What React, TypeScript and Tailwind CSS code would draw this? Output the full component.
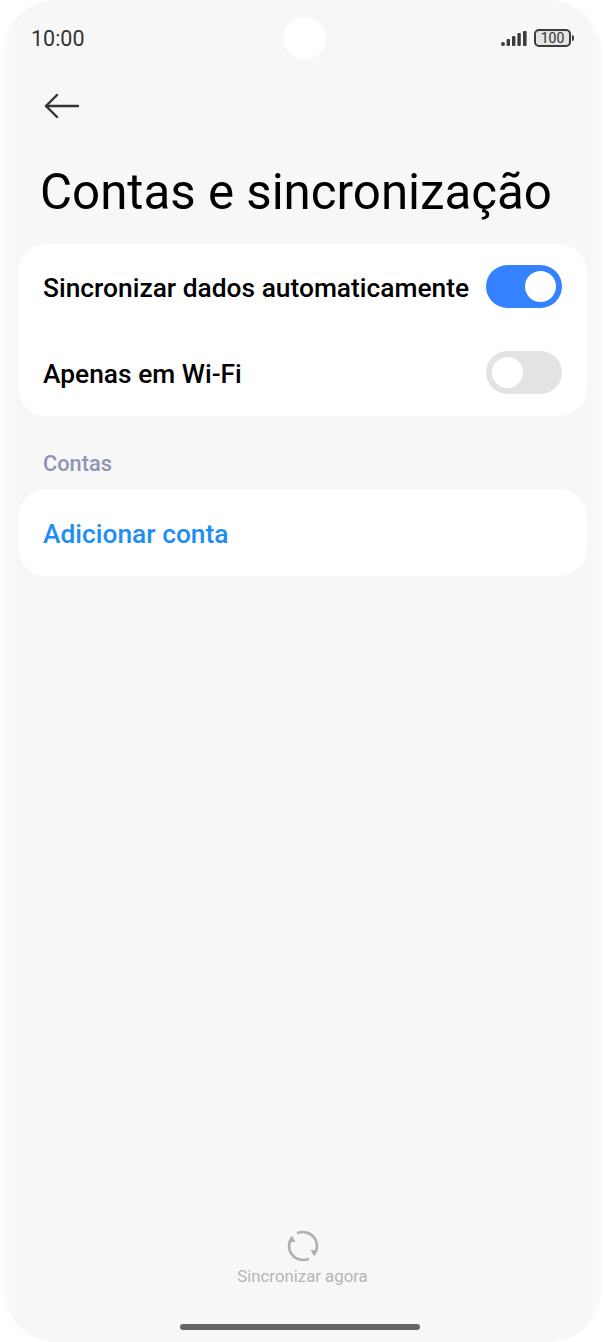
function Toggle({ on }: { on: boolean }) {
  return (
    <div
      className={
        on
          ? "flex h-[43px] w-[76px] flex-none items-center justify-end rounded-full bg-[#3482ff] px-[6px]"
          : "flex h-[43px] w-[76px] flex-none items-center justify-start rounded-full bg-[#e3e3e3] px-[6px]"
      }
    >
      <div className="size-[31px] rounded-full bg-white" />
    </div>
  );
}

function BackIcon() {
  return (
    <svg width="36" height="26" viewBox="0 0 36 26" fill="none" stroke="#333333" strokeWidth="2.4" strokeLinecap="round" strokeLinejoin="round">
      <path d="M34 13 H2" />
      <path d="M13 2 L2 13 L13 24" />
    </svg>
  );
}

function SignalIcon() {
  return (
    <svg width="26" height="15" viewBox="0 0 26 15" fill="#3c3c3c">
      <rect x="0" y="11" width="4" height="4" rx="2" />
      <rect x="5.6" y="8" width="3.4" height="7" rx="1" />
      <rect x="11" y="5" width="3.4" height="10" rx="1" />
      <rect x="16.4" y="2" width="3.4" height="13" rx="1" />
      <rect x="22" y="0" width="3.6" height="15" rx="1" />
    </svg>
  );
}

function BatteryIcon() {
  return (
    <div className="flex items-center gap-[1px]">
      <div className="flex h-[18px] w-[37px] items-center justify-center rounded-[5px] border-2 border-[#3c3c3c] bg-[#e4e4e4] text-[14px] leading-none text-[#333333]">
        100
      </div>
      <div className="h-[6px] w-[2px] rounded-r-sm bg-[#3c3c3c]" />
    </div>
  );
}

function SyncIcon() {
  return (
    <svg width="34" height="34" viewBox="0 0 34 34" fill="none" stroke="#b0b0b0" strokeWidth="2.6">
      <path d="M11.1 4.3 A14 14 0 0 1 27.7 26" />
      <path d="M22.9 29.7 A14 14 0 0 1 6.3 8" />
      <path d="M2.5 13 L9.5 13 L6 7 Z" fill="#b0b0b0" stroke="none" />
      <path d="M24.5 21 L31.5 21 L28 27 Z" fill="#b0b0b0" stroke="none" />
    </svg>
  );
}

export default function App() {
  return (
    <div className="h-[1342px] w-[605px] overflow-hidden bg-white px-[3px] font-['Roboto',sans-serif]">
      <div className="flex h-full flex-col rounded-[54px] bg-[linear-gradient(to_right,#fbfbfb,#f7f7f7_16px,#f7f7f7_calc(100%-16px),#fbfbfb)]">
        <div className="relative flex h-[76px] flex-none items-center justify-between pl-[28px] pr-[28px]">
          <span className="relative top-[1px] text-[21.5px] text-[#333333]">10:00</span>
          <div className="absolute left-[280px] top-[17px] size-[43px] rounded-full bg-white" />
          <div className="flex items-center gap-[7px]">
            <SignalIcon />
            <BatteryIcon />
          </div>
        </div>

        <div className="flex h-[60px] flex-none items-center pl-[41px]">
          <BackIcon />
        </div>

        <h1 className="mt-[26px] pl-[37px] text-[49.25px] leading-[60px] font-normal text-black">
          Contas e sincronização
        </h1>

        <div className="mx-[15px] mt-[22px] flex h-[172px] flex-col rounded-[28px] bg-white">
          <div className="flex h-[85px] items-center justify-between px-[25px]">
            <span className="relative top-[2px] text-[26.35px] font-medium text-black">Sincronizar dados automaticamente</span>
            <Toggle on />
          </div>
          <div className="flex h-[87px] items-center justify-between px-[25px]">
            <span className="relative top-[2px] text-[26.35px] font-medium text-black">Apenas em Wi-Fi</span>
            <Toggle on={false} />
          </div>
        </div>

        <div className="mt-[34px] pl-[40px] text-[21.8px] leading-[28px] font-medium text-[#8f93b5]">Contas</div>

        <div className="mx-[15px] mt-[11px] flex h-[87px] items-center rounded-[28px] bg-white pl-[25px]">
          <span className="relative top-[2px] text-[26.35px] font-medium text-[#1e8df5]">Adicionar conta</span>
        </div>

        <div className="mt-auto flex flex-col items-center">
          <SyncIcon />
          <span className="mt-[2px] text-[16.8px] leading-[22px] text-[#b5b5b5]">Sincronizar agora</span>
          <div className="mb-[12px] mt-[37px] mr-[5px] h-[6px] w-[240px] rounded-full bg-[#666666]" />
        </div>
      </div>
    </div>
  );
}
